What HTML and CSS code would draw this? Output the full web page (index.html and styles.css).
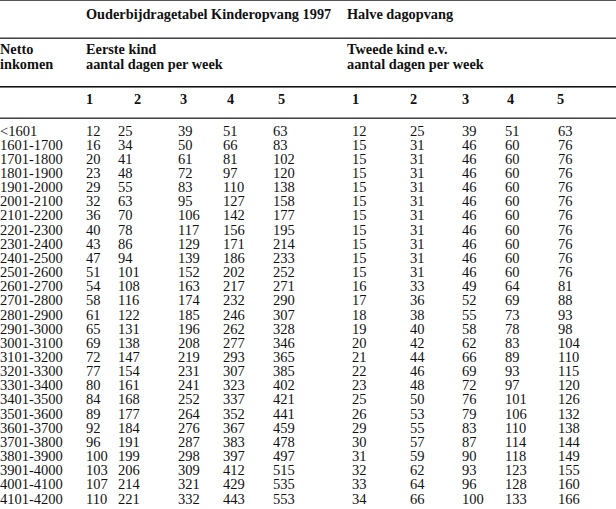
FILE: index.html
```html
<!DOCTYPE html>
<html lang="nl">
<head>
<meta charset="utf-8">
<title>Ouderbijdragetabel Kinderopvang 1997</title>
<link rel="stylesheet" href="styles.css">
</head>
<body>
<div class="sheet">
  <div class="rule rule-top"></div>
  <div class="grid sec-title">
    <div class="c1 span5">Ouderbijdragetabel Kinderopvang 1997</div>
    <div class="c6 span5">Halve dagopvang</div>
  </div>
  <div class="rule rule-gray"></div>
  <div class="grid sec-sub">
    <div class="c0">Netto<br>inkomen</div>
    <div class="c1 span5">Eerste kind<br>aantal dagen per week</div>
    <div class="c6 span5">Tweede kind e.v.<br>aantal dagen per week</div>
  </div>
  <div class="rule rule-dark"></div>
  <div class="grid sec-nums">
    <div class="c1">1</div><div class="c2 h2">2</div><div class="c3 h3">3</div><div class="c4 h4">4</div><div class="c5 h5">5</div>
    <div class="c6">1</div><div class="c7">2</div><div class="c8">3</div><div class="c9 h9">4</div><div class="c10 h10">5</div>
  </div>
  <div class="rule rule-gray"></div>
  <div class="grid body" id="body"></div>
</div>
<script src="script.js"></script>
</body>
</html>
```

FILE: styles.css
```css
html, body {
  margin: 0;
  padding: 0;
  background: #fff;
}
body {
  font-family: "Liberation Serif", "Times New Roman", serif;
  font-size: 14.3px;
  color: #111;
}
.sheet {
  width: 616px;
}
.rule { width: 616px; }
.rule-top { height: 1px; background: #555; }
.rule-gray { height: 2px; background: linear-gradient(#999 0 50%, #444 50% 100%); }
.rule-dark { height: 2px; background: linear-gradient(#111 0 50%, #777 50% 100%); }

.grid {
  display: grid;
  grid-template-columns: 86px 32px 60px 45px 50px 79px 58px 52px 43px 53px 58px;
  white-space: nowrap;
}
.sec-title {
  height: 31px;
  padding-top: 5px;
  line-height: 16px;
  font-weight: bold;
}
.sec-sub {
  height: 44px;
  padding-top: 3px;
  line-height: 15px;
  font-weight: bold;
}
.sec-nums {
  height: 26px;
  padding-top: 3px;
  line-height: 16px;
  font-weight: bold;
}
.body {
  padding-top: 4.5px;
  line-height: 14.15px;
  font-size: 14.5px;
}
.c0 { grid-column: 1; }
.c1 { grid-column: 2; }
.c2 { grid-column: 3; }
.c3 { grid-column: 4; }
.c4 { grid-column: 5; }
.c5 { grid-column: 6; }
.c6 { grid-column: 7; }
.c7 { grid-column: 8; }
.c8 { grid-column: 9; }
.c9 { grid-column: 10; }
.c10 { grid-column: 11; }
.span5 { grid-column-end: span 5; }
.sec-title .c6, .sec-sub .c6 { margin-left: -5px; }
.h2 { padding-left: 16px; }
.h3 { padding-left: 2px; }
.h4 { padding-left: 4px; }
.h5 { padding-left: 5px; }
.h9 { padding-left: 2px; }
.h10 { margin-left: -1px; }
```

FILE: script.js
```js
var data = [
["<1601",12,25,39,51,63,12,25,39,51,63],
["1601-1700",16,34,50,66,83,15,31,46,60,76],
["1701-1800",20,41,61,81,102,15,31,46,60,76],
["1801-1900",23,48,72,97,120,15,31,46,60,76],
["1901-2000",29,55,83,110,138,15,31,46,60,76],
["2001-2100",32,63,95,127,158,15,31,46,60,76],
["2101-2200",36,70,106,142,177,15,31,46,60,76],
["2201-2300",40,78,117,156,195,15,31,46,60,76],
["2301-2400",43,86,129,171,214,15,31,46,60,76],
["2401-2500",47,94,139,186,233,15,31,46,60,76],
["2501-2600",51,101,152,202,252,15,31,46,60,76],
["2601-2700",54,108,163,217,271,16,33,49,64,81],
["2701-2800",58,116,174,232,290,17,36,52,69,88],
["2801-2900",61,122,185,246,307,18,38,55,73,93],
["2901-3000",65,131,196,262,328,19,40,58,78,98],
["3001-3100",69,138,208,277,346,20,42,62,83,104],
["3101-3200",72,147,219,293,365,21,44,66,89,110],
["3201-3300",77,154,231,307,385,22,46,69,93,115],
["3301-3400",80,161,241,323,402,23,48,72,97,120],
["3401-3500",84,168,252,337,421,25,50,76,101,126],
["3501-3600",89,177,264,352,441,26,53,79,106,132],
["3601-3700",92,184,276,367,459,29,55,83,110,138],
["3701-3800",96,191,287,383,478,30,57,87,114,144],
["3801-3900",100,199,298,397,497,31,59,90,118,149],
["3901-4000",103,206,309,412,515,32,62,93,123,155],
["4001-4100",107,214,321,429,535,33,64,96,128,160],
["4101-4200",110,221,332,443,553,34,66,100,133,166]
];
var body = document.getElementById("body");
data.forEach(function (row) {
  row.forEach(function (v, i) {
    var d = document.createElement("div");
    d.className = "c" + i;
    d.textContent = v;
    body.appendChild(d);
  });
});
```
